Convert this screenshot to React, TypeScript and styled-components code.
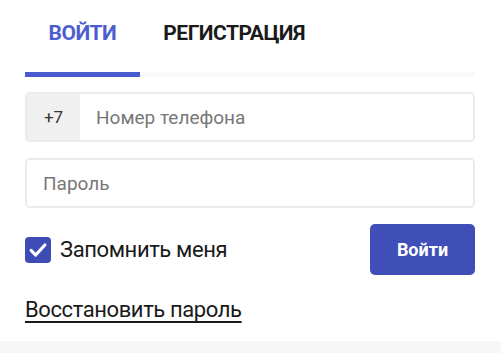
import styled, { createGlobalStyle } from "styled-components";

const GlobalStyle = createGlobalStyle`
  html, body {
    margin: 0;
    padding: 0;
    background: #f7f7f7;
    font-family: Roboto, "Noto Sans", sans-serif;
  }
`;

const Card = styled.div`
  background: #fff;
  height: 341px;
  padding: 0 26px 0 25px;
  box-sizing: border-box;
`;

const TabBar = styled.div`
  display: flex;
  border-bottom: 5px solid #f9f9f9;
`;

const Tab = styled.button<{ $active?: boolean }>`
  border: none;
  background: none;
  padding: 21px 23.5px 27px;
  margin-bottom: -5px;
  border-bottom: 5px solid ${(p) => (p.$active ? "#4a5bcf" : "transparent")};
  font-family: inherit;
  font-weight: 700;
  font-size: 21px;
  line-height: 24px;
  letter-spacing: -0.5px;
  color: ${(p) => (p.$active ? "#4d5dcf" : "#1a1a1a")};
  cursor: pointer;
`;

const Form = styled.form`
  display: flex;
  flex-direction: column;
  gap: 16px;
  padding-top: 15px;
`;

const Field = styled.div`
  display: flex;
  height: 50px;
  border: 2px solid #ebebeb;
  border-radius: 5px;
  box-sizing: border-box;
  overflow: hidden;
`;

const Prefix = styled.span`
  width: 53px;
  flex: none;
  background: #f0f0f0;
  display: flex;
  align-items: center;
  justify-content: center;
  font-size: 17px;
  color: #333;
`;

const Input = styled.input`
  flex: 1;
  border: none;
  outline: none;
  padding: 0 16px;
  font-family: inherit;
  font-size: 19px;
  color: #333;
  &::placeholder {
    color: #777;
  }
`;

const ActionRow = styled.div`
  display: flex;
  align-items: center;
  justify-content: space-between;
`;

const Remember = styled.label`
  display: flex;
  align-items: center;
  gap: 9px;
  font-size: 22px;
  letter-spacing: -0.4px;
  color: #1a1a1a;
`;

const Check = styled.span`
  width: 26px;
  height: 26px;
  border-radius: 4px;
  background: #3e4db5;
  display: flex;
  align-items: center;
  justify-content: center;
`;

const Submit = styled.button`
  width: 105px;
  height: 51px;
  border: none;
  border-radius: 5px;
  background: #3f4fb7;
  color: #fff;
  font-family: inherit;
  font-weight: 700;
  font-size: 18px;
`;

const Restore = styled.a`
  align-self: flex-start;
  margin-top: 6px;
  font-size: 22px;
  letter-spacing: -0.4px;
  color: #1a1a1a;
  text-decoration: underline;
  text-underline-offset: 4px;
`;

export default function App() {
  return (
    <>
      <GlobalStyle />
      <Card>
        <TabBar>
          <Tab $active>ВОЙТИ</Tab>
          <Tab>РЕГИСТРАЦИЯ</Tab>
        </TabBar>
        <Form onSubmit={(e) => e.preventDefault()}>
          <Field>
            <Prefix>+7</Prefix>
            <Input placeholder="Номер телефона" />
          </Field>
          <Field>
            <Input type="password" placeholder="Пароль" />
          </Field>
          <ActionRow>
            <Remember>
              <Check>
                <svg width="22" height="22" viewBox="0 0 24 24" fill="none">
                  <path
                    d="M4.5 12.5l5 5L19.5 6.5"
                    stroke="#fff"
                    strokeWidth="3.4"
                    strokeLinecap="round"
                    strokeLinejoin="round"
                  />
                </svg>
              </Check>
              Запомнить меня
            </Remember>
            <Submit type="submit">Войти</Submit>
          </ActionRow>
          <Restore href="#">Восстановить пароль</Restore>
        </Form>
      </Card>
    </>
  );
}
